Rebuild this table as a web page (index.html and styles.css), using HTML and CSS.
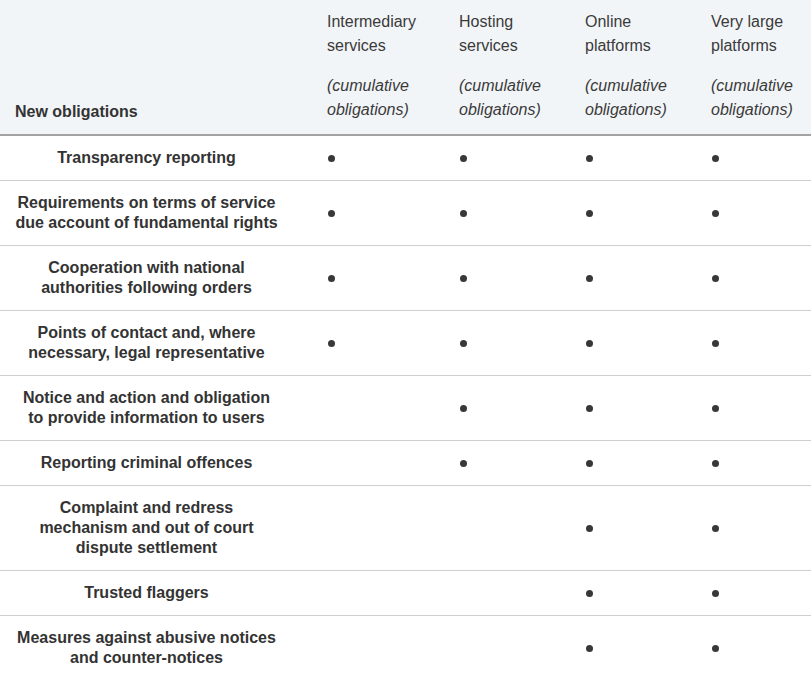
FILE: index.html
```html
<!DOCTYPE html>
<html lang="en">
<head>
<meta charset="utf-8">
<title>New obligations</title>
<link rel="stylesheet" href="styles.css">
</head>
<body>
<table class="obl">
  <colgroup>
    <col class="c1"><col class="c2"><col class="c3"><col class="c4"><col class="c5">
  </colgroup>
  <thead>
    <tr>
      <th class="lead">New obligations</th>
      <th><p>Intermediary<br>services</p><p class="cum">(cumulative<br>obligations)</p></th>
      <th><p>Hosting<br>services</p><p class="cum">(cumulative<br>obligations)</p></th>
      <th><p>Online<br>platforms</p><p class="cum">(cumulative<br>obligations)</p></th>
      <th><p>Very large<br>platforms</p><p class="cum">(cumulative<br>obligations)</p></th>
    </tr>
  </thead>
  <tbody>
    <tr><td class="name">Transparency reporting</td><td><span class="dot"></span></td><td><span class="dot"></span></td><td><span class="dot"></span></td><td><span class="dot"></span></td></tr>
    <tr><td class="name">Requirements on terms of service<br>due account of fundamental rights</td><td><span class="dot"></span></td><td><span class="dot"></span></td><td><span class="dot"></span></td><td><span class="dot"></span></td></tr>
    <tr><td class="name">Cooperation with national<br>authorities following orders</td><td><span class="dot"></span></td><td><span class="dot"></span></td><td><span class="dot"></span></td><td><span class="dot"></span></td></tr>
    <tr><td class="name">Points of contact and, where<br>necessary, legal representative</td><td><span class="dot"></span></td><td><span class="dot"></span></td><td><span class="dot"></span></td><td><span class="dot"></span></td></tr>
    <tr><td class="name">Notice and action and obligation<br>to provide information to users</td><td></td><td><span class="dot"></span></td><td><span class="dot"></span></td><td><span class="dot"></span></td></tr>
    <tr><td class="name">Reporting criminal offences</td><td></td><td><span class="dot"></span></td><td><span class="dot"></span></td><td><span class="dot"></span></td></tr>
    <tr><td class="name">Complaint and redress<br>mechanism and out of court<br>dispute settlement</td><td></td><td></td><td><span class="dot"></span></td><td><span class="dot"></span></td></tr>
    <tr><td class="name">Trusted flaggers</td><td></td><td></td><td><span class="dot"></span></td><td><span class="dot"></span></td></tr>
    <tr><td class="name">Measures against abusive notices<br>and counter-notices</td><td></td><td></td><td><span class="dot"></span></td><td><span class="dot"></span></td></tr>
  </tbody>
</table>
</body>
</html>
```
FILE: styles.css
```css
html, body {
  margin: 0;
  padding: 0;
  background: #ffffff;
}
body {
  font-family: "Liberation Sans", Arial, Helvetica, sans-serif;
  font-size: 16px;
  color: #333333;
}
.obl {
  width: 811px;
  table-layout: fixed;
  border-collapse: separate;
  border-spacing: 0;
}
.c1 { width: 312px; }
.c2 { width: 132px; }
.c3 { width: 126px; }
.c4 { width: 126px; }
.c5 { width: 115px; }

.obl thead th {
  background: #f2f5f8;
  border-bottom: 2px solid #a3a3a3;
  padding: 10px 15px 12px 15px;
  text-align: left;
  vertical-align: top;
  font-weight: normal;
  line-height: 24px;
  color: #3a3a3a;
  white-space: nowrap;
}
.obl thead th p {
  margin: 0;
}
.obl thead th p.cum {
  margin-top: 16px;
  font-style: italic;
}
.obl thead th.lead {
  vertical-align: bottom;
  font-weight: bold;
  line-height: 20px;
  color: #333333;
}
.obl tbody td {
  padding: 12px 15px;
  border-bottom: 1px solid #cfcfcf;
  line-height: 20px;
  vertical-align: middle;
  text-align: left;
}
.obl tbody td.name {
  padding: 12px 34px 12px 15px;
  text-align: center;
  font-weight: bold;
  white-space: nowrap;
}
.dot {
  display: block;
  width: 7px;
  height: 7px;
  margin-left: 1px;
  border-radius: 50%;
  background: #383838;
}
```
